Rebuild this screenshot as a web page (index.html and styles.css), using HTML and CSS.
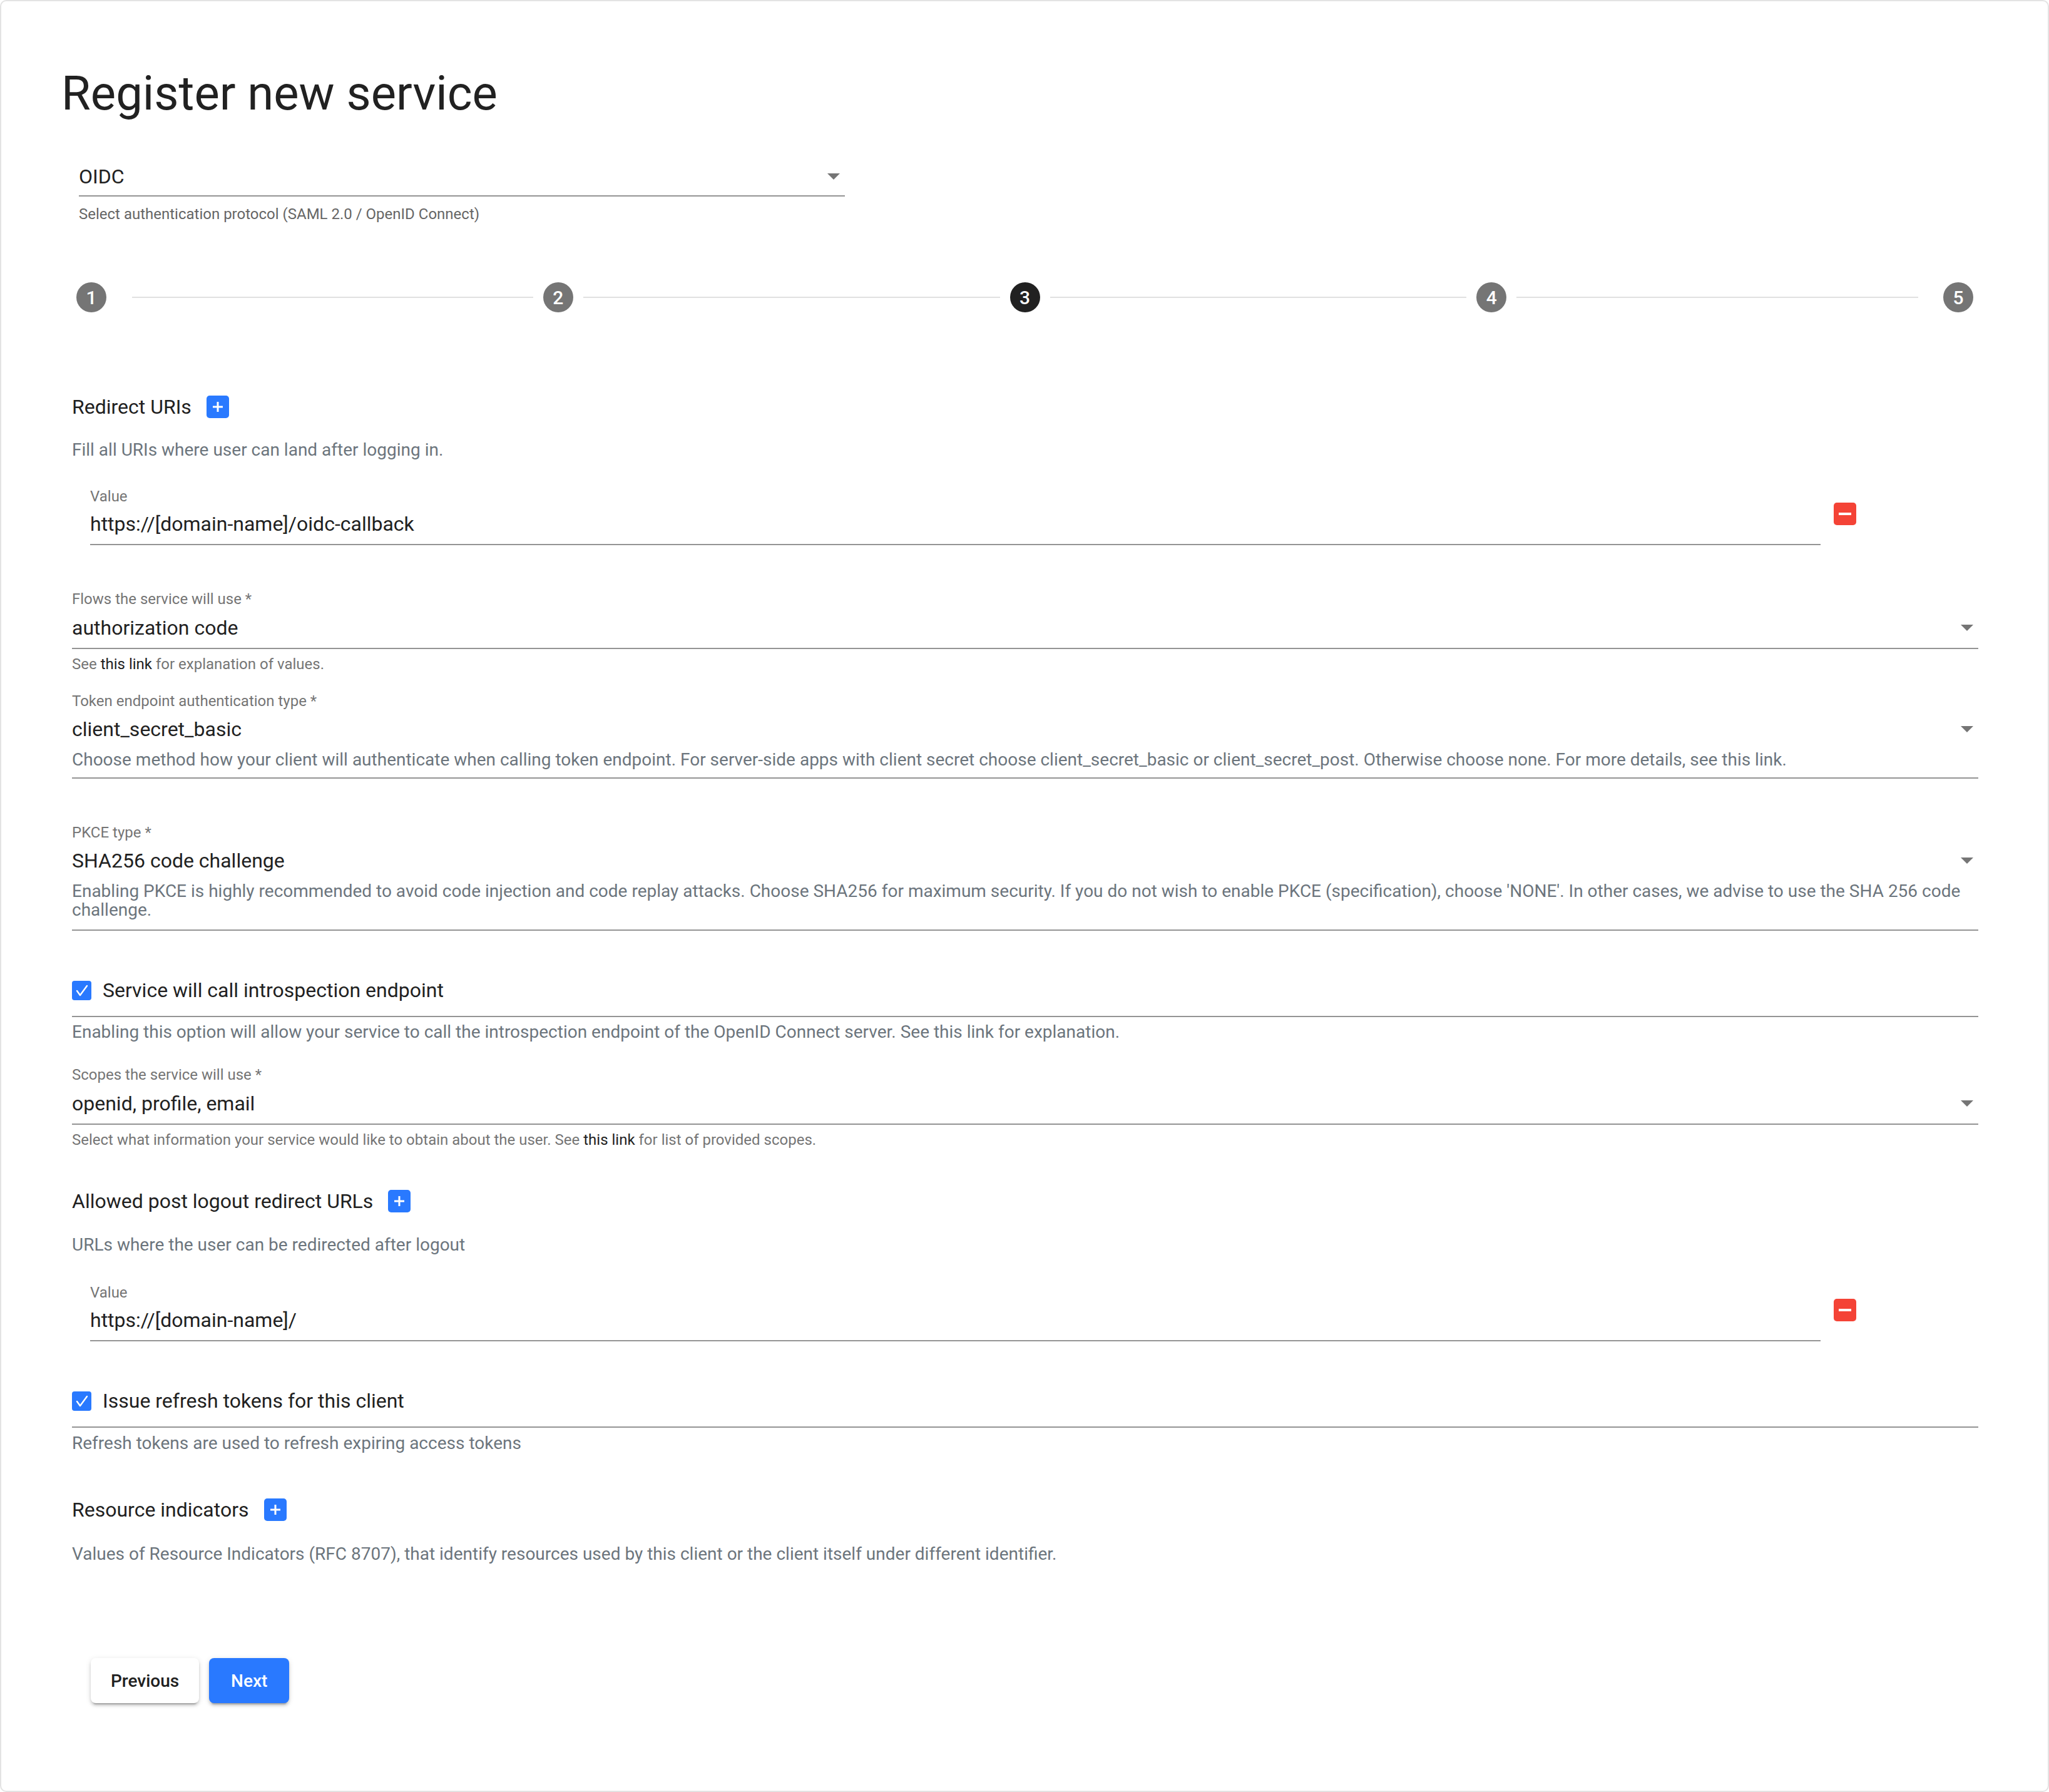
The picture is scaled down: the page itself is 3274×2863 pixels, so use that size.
FILE: index.html
```html
<!DOCTYPE html>
<html lang="en">
<head>
<meta charset="utf-8">
<title>Register new service</title>
<link rel="stylesheet" href="styles.css">
</head>
<body>
<div class="card">
  <h1 class="title">Register new service</h1>

  <div class="protocol">
    <div class="select-line">
      <span class="select-value">OIDC</span>
      <span class="arrow"></span>
    </div>
    <div class="helper">Select authentication protocol (SAML 2.0 / OpenID Connect)</div>
  </div>

  <div class="stepper">
    <div class="step">1</div>
    <div class="line line-first"></div>
    <div class="step">2</div>
    <div class="line"></div>
    <div class="step step-active">3</div>
    <div class="line"></div>
    <div class="step">4</div>
    <div class="line line-last"></div>
    <div class="step">5</div>
  </div>

  <form class="form">
    <div class="list-head gap-redirect">
      <span>Redirect URIs</span>
      <button type="button" class="btn-icon btn-add" aria-label="Add">
        <svg width="18" height="18" viewBox="0 0 18 18"><path d="M9 1v16M1 9h16" stroke="#fff" stroke-width="3"/></svg>
      </button>
    </div>
    <p class="muted gap-31">Fill all URIs where user can land after logging in.</p>
    <div class="value-row gap-40">
      <div class="value-field">
        <div class="field-label">Value</div>
        <div class="field-value">https://[domain-name]/oidc-callback</div>
      </div>
      <button type="button" class="btn-icon btn-remove" aria-label="Remove">
        <svg width="20" height="4" viewBox="0 0 20 4"><rect width="20" height="4" fill="#fff"/></svg>
      </button>
    </div>

    <div class="select-field gap-70">
      <div class="field-label">Flows the service will use *</div>
      <div class="select-box">
        <div class="select-row"><span class="select-value">authorization code</span><span class="arrow"></span></div>
      </div>
      <div class="hint">See <span class="hint-link">this link</span> for explanation of values.</div>
    </div>

    <div class="select-field gap-27">
      <div class="field-label">Token endpoint authentication type *</div>
      <div class="select-box select-box-hint">
        <div class="select-row"><span class="select-value">client_secret_basic</span><span class="arrow"></span></div>
        <div class="inner-hint">Choose method how your client will authenticate when calling token endpoint. For server-side apps with client secret choose client_secret_basic or client_secret_post. Otherwise choose none. For more details, see this link.</div>
      </div>
    </div>

    <div class="select-field gap-70">
      <div class="field-label">PKCE type *</div>
      <div class="select-box select-box-hint select-box-pkce">
        <div class="select-row"><span class="select-value">SHA256 code challenge</span><span class="arrow"></span></div>
        <div class="inner-hint inner-hint-multi">Enabling PKCE is highly recommended to avoid code injection and code replay attacks. Choose SHA256 for maximum security. If you do not wish to enable PKCE (specification), choose 'NONE'. In other cases, we advise to use the SHA 256 code challenge.</div>
      </div>
    </div>

    <div class="check-row gap-75">
      <span class="checkbox"><svg width="31" height="31" viewBox="0 0 31 31"><polyline points="8,16 13,23 24,8" fill="none" stroke="#fff" stroke-width="2.4" stroke-linecap="round" stroke-linejoin="round"/></svg></span>
      <span class="check-label">Service will call introspection endpoint</span>
    </div>
    <p class="muted gap-6">Enabling this option will allow your service to call the introspection endpoint of the OpenID Connect server. See this link for explanation.</p>

    <div class="select-field gap-34">
      <div class="field-label">Scopes the service will use *</div>
      <div class="select-box">
        <div class="select-row"><span class="select-value">openid, profile, email</span><span class="arrow"></span></div>
      </div>
      <div class="hint">Select what information your service would like to obtain about the user. See <span class="hint-link">this link</span> for list of provided scopes.</div>
    </div>

    <div class="list-head gap-62">
      <span>Allowed post logout redirect URLs</span>
      <button type="button" class="btn-icon btn-add" aria-label="Add">
        <svg width="18" height="18" viewBox="0 0 18 18"><path d="M9 1v16M1 9h16" stroke="#fff" stroke-width="3"/></svg>
      </button>
    </div>
    <p class="muted gap-32">URLs where the user can be redirected after logout</p>
    <div class="value-row gap-42">
      <div class="value-field">
        <div class="field-label">Value</div>
        <div class="field-value">https://[domain-name]/</div>
      </div>
      <button type="button" class="btn-icon btn-remove" aria-label="Remove">
        <svg width="20" height="4" viewBox="0 0 20 4"><rect width="20" height="4" fill="#fff"/></svg>
      </button>
    </div>

    <div class="check-row gap-75">
      <span class="checkbox"><svg width="31" height="31" viewBox="0 0 31 31"><polyline points="8,16 13,23 24,8" fill="none" stroke="#fff" stroke-width="2.4" stroke-linecap="round" stroke-linejoin="round"/></svg></span>
      <span class="check-label">Issue refresh tokens for this client</span>
    </div>
    <p class="muted gap-7">Refresh tokens are used to refresh expiring access tokens</p>

    <div class="list-head gap-68">
      <span>Resource indicators</span>
      <button type="button" class="btn-icon btn-add" aria-label="Add">
        <svg width="18" height="18" viewBox="0 0 18 18"><path d="M9 1v16M1 9h16" stroke="#fff" stroke-width="3"/></svg>
      </button>
    </div>
    <p class="muted gap-33">Values of Resource Indicators (RFC 8707), that identify resources used by this client or the client itself under different identifier.</p>

    <div class="actions">
      <button type="button" class="btn btn-prev">Previous</button>
      <button type="button" class="btn btn-next">Next</button>
    </div>
  </form>
</div>
</body>
</html>
```

FILE: styles.css
```css
* { box-sizing: border-box; }

html, body {
  margin: 0;
  padding: 0;
  background: #ffffff;
}

body {
  font-family: Roboto, "Noto Sans", "Liberation Sans", sans-serif;
  color: #212121;
}

.card {
  width: 3274px;
  height: 2863px;
  border: 2px solid #e3e3e3;
  border-radius: 10px;
  padding: 0 111px 0 113px;
  overflow: hidden;
}

.title {
  margin: 100px 0 0 -17px;
  font-size: 76px;
  line-height: 94px;
  font-weight: 400;
  color: #212121;
}

/* protocol select */
.protocol {
  margin: 66px 0 0 11px;
  width: 1224px;
}

.select-line {
  display: flex;
  align-items: center;
  border-bottom: 2px solid #949494;
  padding-bottom: 10px;
}

.select-value {
  flex: 1;
  font-size: 32px;
  line-height: 40px;
  color: #212121;
}

.arrow {
  width: 0;
  height: 0;
  border-left: 10px solid transparent;
  border-right: 10px solid transparent;
  border-top: 10px solid #757575;
  margin-right: 8px;
}

.helper {
  margin-top: 12px;
  font-size: 24px;
  line-height: 32px;
  color: #666666;
}

/* stepper */
.stepper {
  display: grid;
  grid-template-columns: 48px 1fr 48px 1fr 48px 1fr 48px 1fr 48px;
  align-items: center;
  margin: 93px 8px 0 7px;
}

.step {
  width: 48px;
  height: 48px;
  border-radius: 50%;
  background: #757575;
  color: #ffffff;
  font-size: 30px;
  font-weight: 500;
  display: flex;
  align-items: center;
  justify-content: center;
}

.step-active { background: #212121; }

.line {
  height: 2px;
  background: #e0e0e0;
  margin: 0 16px;
}

.line-first { margin-left: 41px; }
.line-last { margin-right: 40px; }

/* form */
.form { margin: 0; }

.list-head {
  display: flex;
  align-items: center;
  height: 40px;
  font-size: 32px;
  line-height: 40px;
  color: #212121;
}

.btn-icon {
  width: 36px;
  height: 36px;
  border: 0;
  border-radius: 5px;
  padding: 0;
  display: flex;
  align-items: center;
  justify-content: center;
  flex: none;
}

.btn-add {
  background: #2979ff;
  margin-left: 24px;
}

.btn-remove {
  background: #f44336;
  margin-left: 21px;
  margin-top: 26px;
}

.muted {
  margin-bottom: 0;
  font-size: 28px;
  line-height: 36px;
  color: #6c757d;
}

.value-row {
  display: flex;
  align-items: flex-start;
  padding: 0 195px 0 29px;
}

.value-field {
  flex: 1;
  border-bottom: 2px solid #949494;
  padding-bottom: 12px;
}

.field-label {
  font-size: 24px;
  line-height: 32px;
  color: #757575;
}

.field-value {
  margin-top: 8px;
  font-size: 32px;
  line-height: 40px;
  color: #212121;
}

.select-box {
  margin-top: 10px;
  border-bottom: 2px solid #949494;
  padding-bottom: 12px;
}

.select-box-hint {
  margin-top: 9px;
  padding-bottom: 10px;
}

.select-box-pkce { padding-bottom: 16px; }

.select-row {
  display: flex;
  align-items: center;
}

.inner-hint {
  margin-top: 11px;
  font-size: 28px;
  line-height: 36px;
  color: #6c757d;
}

.inner-hint-multi {
  margin-top: 14px;
  line-height: 30px;
}

.hint {
  margin-top: 8px;
  font-size: 24px;
  line-height: 32px;
  color: #757575;
}

.hint-link { color: #212121; }

.check-row {
  display: flex;
  align-items: center;
  height: 40px;
  box-sizing: content-box;
  padding-bottom: 21px;
  border-bottom: 2px solid #949494;
}

.checkbox {
  width: 31px;
  height: 31px;
  border-radius: 4px;
  background: #2979ff;
  margin-right: 18px;
  display: flex;
}

.check-label {
  font-size: 32px;
  line-height: 40px;
  color: #212121;
}

/* spacing between form blocks */
.gap-redirect { margin-top: 131px; }
.gap-6 { margin-top: 6px; }
.gap-7 { margin-top: 7px; }
.gap-27 { margin-top: 27px; }
.gap-31 { margin-top: 31px; }
.gap-32 { margin-top: 32px; }
.gap-33 { margin-top: 33px; }
.gap-34 { margin-top: 34px; }
.gap-40 { margin-top: 40px; }
.gap-42 { margin-top: 42px; }
.gap-62 { margin-top: 62px; }
.gap-68 { margin-top: 68px; }
.gap-70 { margin-top: 70px; }
.gap-75 { margin-top: 75px; }

.actions {
  display: flex;
  gap: 16px;
  margin: 148px 0 0 30px;
}

.btn {
  height: 72px;
  min-width: 128px;
  padding: 0 32px;
  border: 0;
  border-radius: 8px;
  font-family: Roboto, "Noto Sans", sans-serif;
  font-size: 28px;
  font-weight: 500;
  box-shadow: 0 6px 2px -4px rgba(0,0,0,.2), 0 4px 4px 0 rgba(0,0,0,.14), 0 2px 10px 0 rgba(0,0,0,.12);
}

.btn-prev {
  background: #ffffff;
  color: #212121;
}

.btn-next {
  background: #2979ff;
  color: #ffffff;
}
```
